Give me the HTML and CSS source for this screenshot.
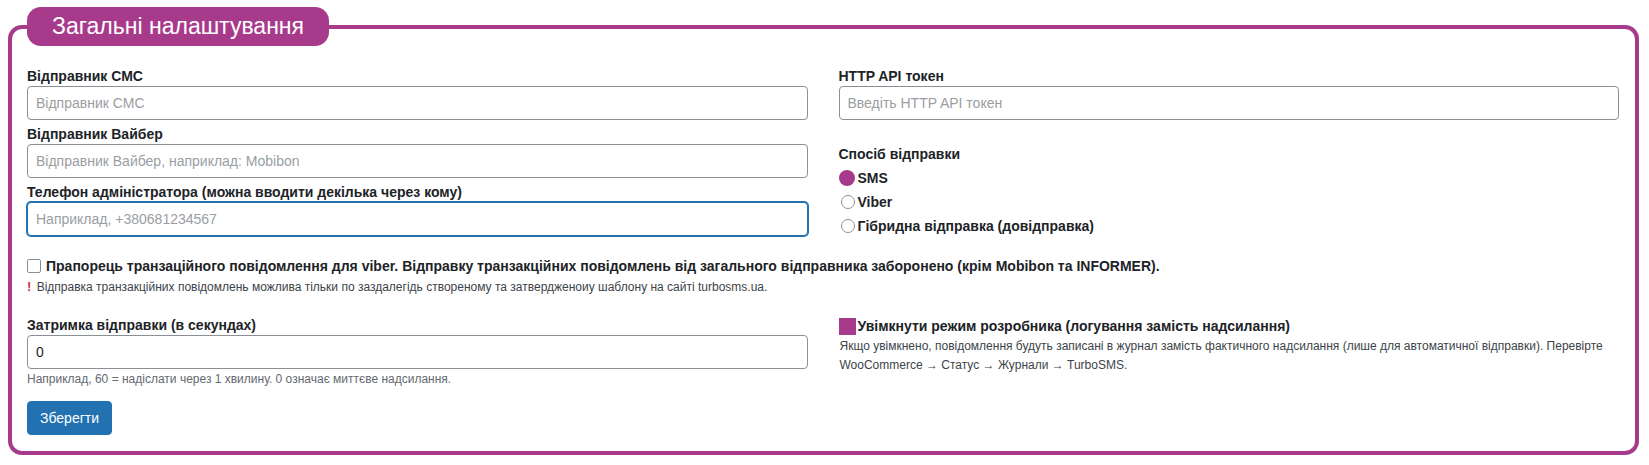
FILE: index.html
```html
<!DOCTYPE html>
<html lang="uk">
 <head>
  <meta charset="utf-8">
  <title>Загальні налаштування</title>
  <link rel="stylesheet" href="styles.css">
 </head>
 <body>
  <form class="settings-form">
   <fieldset class="settings">
    <legend>Загальні налаштування</legend>

    <div class="cols">
     <div class="col">
      <div class="field">
       <label for="sender-sms">Відправник СМС</label>
       <input type="text" id="sender-sms" placeholder="Відправник СМС">
      </div>
      <div class="field">
       <label for="sender-viber">Відправник Вайбер</label>
       <input type="text" id="sender-viber" placeholder="Відправник Вайбер, наприклад: Mobibon">
      </div>
      <div class="field">
       <label for="admin-phone">Телефон адміністратора (можна вводити декілька через кому)</label>
       <input type="text" id="admin-phone" class="is-focused" placeholder="Наприклад, +380681234567">
      </div>
     </div>

     <div class="col">
      <div class="field">
       <label for="api-token">HTTP API токен</label>
       <input type="text" id="api-token" placeholder="Введіть HTTP API токен">
      </div>
      <div class="field method">
       <span class="field-title">Спосіб відправки</span>
       <label class="radio"><input type="radio" name="method" value="sms" checked> SMS</label>
       <label class="radio"><input type="radio" name="method" value="viber"> Viber</label>
       <label class="radio"><input type="radio" name="method" value="hybrid"> Гібридна відправка (довідправка)</label>
      </div>
     </div>
    </div>

    <div class="transact">
     <label class="check"><input type="checkbox" id="viber-transact"> Прапорець транзаційного повідомлення для viber. Відправку транзакційних повідомлень від загального відправника заборонено (крім Mobibon та INFORMER).</label>
     <p class="note"><span class="warn">!</span> Відправка транзакційних повідомлень можлива тільки по заздалегідь створеному та затвердженоиу шаблону на сайті turbosms.ua.</p>
    </div>

    <div class="cols">
     <div class="col">
      <div class="field">
       <label for="delay">Затримка відправки (в секундах)</label>
       <input type="number" id="delay" value="0">
       <p class="hint">Наприклад, 60 = надіслати через 1 хвилину. 0 означає миттєве надсилання.</p>
      </div>
     </div>
     <div class="col">
      <label class="check dev"><input type="checkbox" id="dev-mode" checked> Увімкнути режим розробника (логування замість надсилання)</label>
      <p class="desc">Якщо увімкнено, повідомлення будуть записані в журнал замість фактичного надсилання (лише для автоматичної відправки). Перевірте WooCommerce &rarr; Статус &rarr; Журнали &rarr; TurboSMS.</p>
     </div>
    </div>

    <button type="button" class="save">Зберегти</button>
   </fieldset>
  </form>
 </body>
</html>
```

FILE: styles.css
```css
body {
    margin: 7px 10px 8px 8px;
    background: #fff;
    font-family: "Liberation Sans", Arial, sans-serif;
    font-size: 14px;
    color: #1d2327;
}

.settings {
    margin: 0;
    padding: 21px 16px 16px 15px;
    border: 4px solid #a83a8c;
    border-radius: 14px;
    min-width: 0;
}

.settings legend {
    margin: 0;
    padding: 0 25px;
    height: 39px;
    line-height: 39px;
    background: #a83a8c;
    border-radius: 14px;
    color: #fff;
    font-size: 23px;
}

.cols {
    display: grid;
    grid-template-columns: 1fr 1fr;
    column-gap: 31px;
}

.field {
    margin-bottom: 5px;
}

.field label,
.field-title {
    display: block;
    font-weight: bold;
    line-height: 19px;
}

input[type="text"],
input[type="number"] {
    display: block;
    box-sizing: border-box;
    width: 100%;
    height: 34px;
    margin: 0;
    padding: 0 8px;
    border: 1px solid #8c8f94;
    border-radius: 4px;
    font-family: inherit;
    font-size: 14px;
    color: #1d2327;
    background: #fff;
}

input::placeholder {
    color: #9a9ea3;
}

input.is-focused {
    border-color: #2271b1;
    box-shadow: 0 0 0 1px #2271b1;
    outline: none;
}

input[type="number"]::-webkit-inner-spin-button {
    display: none;
}

.method {
    margin-top: 25px;
}

.method .field-title {
    margin-bottom: 2px;
}

.field .radio {
    display: flex;
    align-items: center;
    gap: 2px;
    line-height: 24px;
}

.radio input {
    appearance: none;
    box-sizing: border-box;
    width: 14px;
    height: 14px;
    margin: 0 1px 0 2px;
    border: 1px solid #8c8f94;
    border-radius: 50%;
    background: #fff;
}

.radio input:checked {
    width: 16px;
    height: 16px;
    margin: 0 1px 0 0;
    border: none;
    background: #a83a8c;
}

.transact {
    margin-top: 13px;
}

.check {
    display: flex;
    align-items: center;
    gap: 5px;
    font-weight: bold;
    line-height: 20px;
}

.check input {
    appearance: none;
    box-sizing: border-box;
    flex: none;
    width: 14px;
    height: 14px;
    margin: 0;
    border: 1px solid #8c8f94;
    border-radius: 2px;
    background: #fff;
}

.check.dev {
    gap: 2px;
}

.check.dev input {
    width: 17px;
    height: 17px;
    border: none;
    border-radius: 0;
    background: #a83a8c;
}

.note {
    margin: 2px 0 20px;
    font-size: 12px;
    line-height: 18px;
    color: #3c434a;
}

.warn {
    color: #d63638;
    font-weight: bold;
    font-size: 13px;
    margin-right: 2px;
}

.hint {
    margin: 1px 0 0;
    font-size: 12px;
    line-height: 18px;
    color: #646970;
}

.desc {
    margin: 1px 0 0 1px;
    font-size: 12px;
    line-height: 19px;
    color: #3c434a;
}

.save {
    margin-top: 8px;
    padding: 0 12px;
    height: 34px;
    border: 1px solid #2271b1;
    border-radius: 4px;
    background: #2271b1;
    color: #fff;
    font-family: inherit;
    font-size: 14px;
    cursor: pointer;
}
```
